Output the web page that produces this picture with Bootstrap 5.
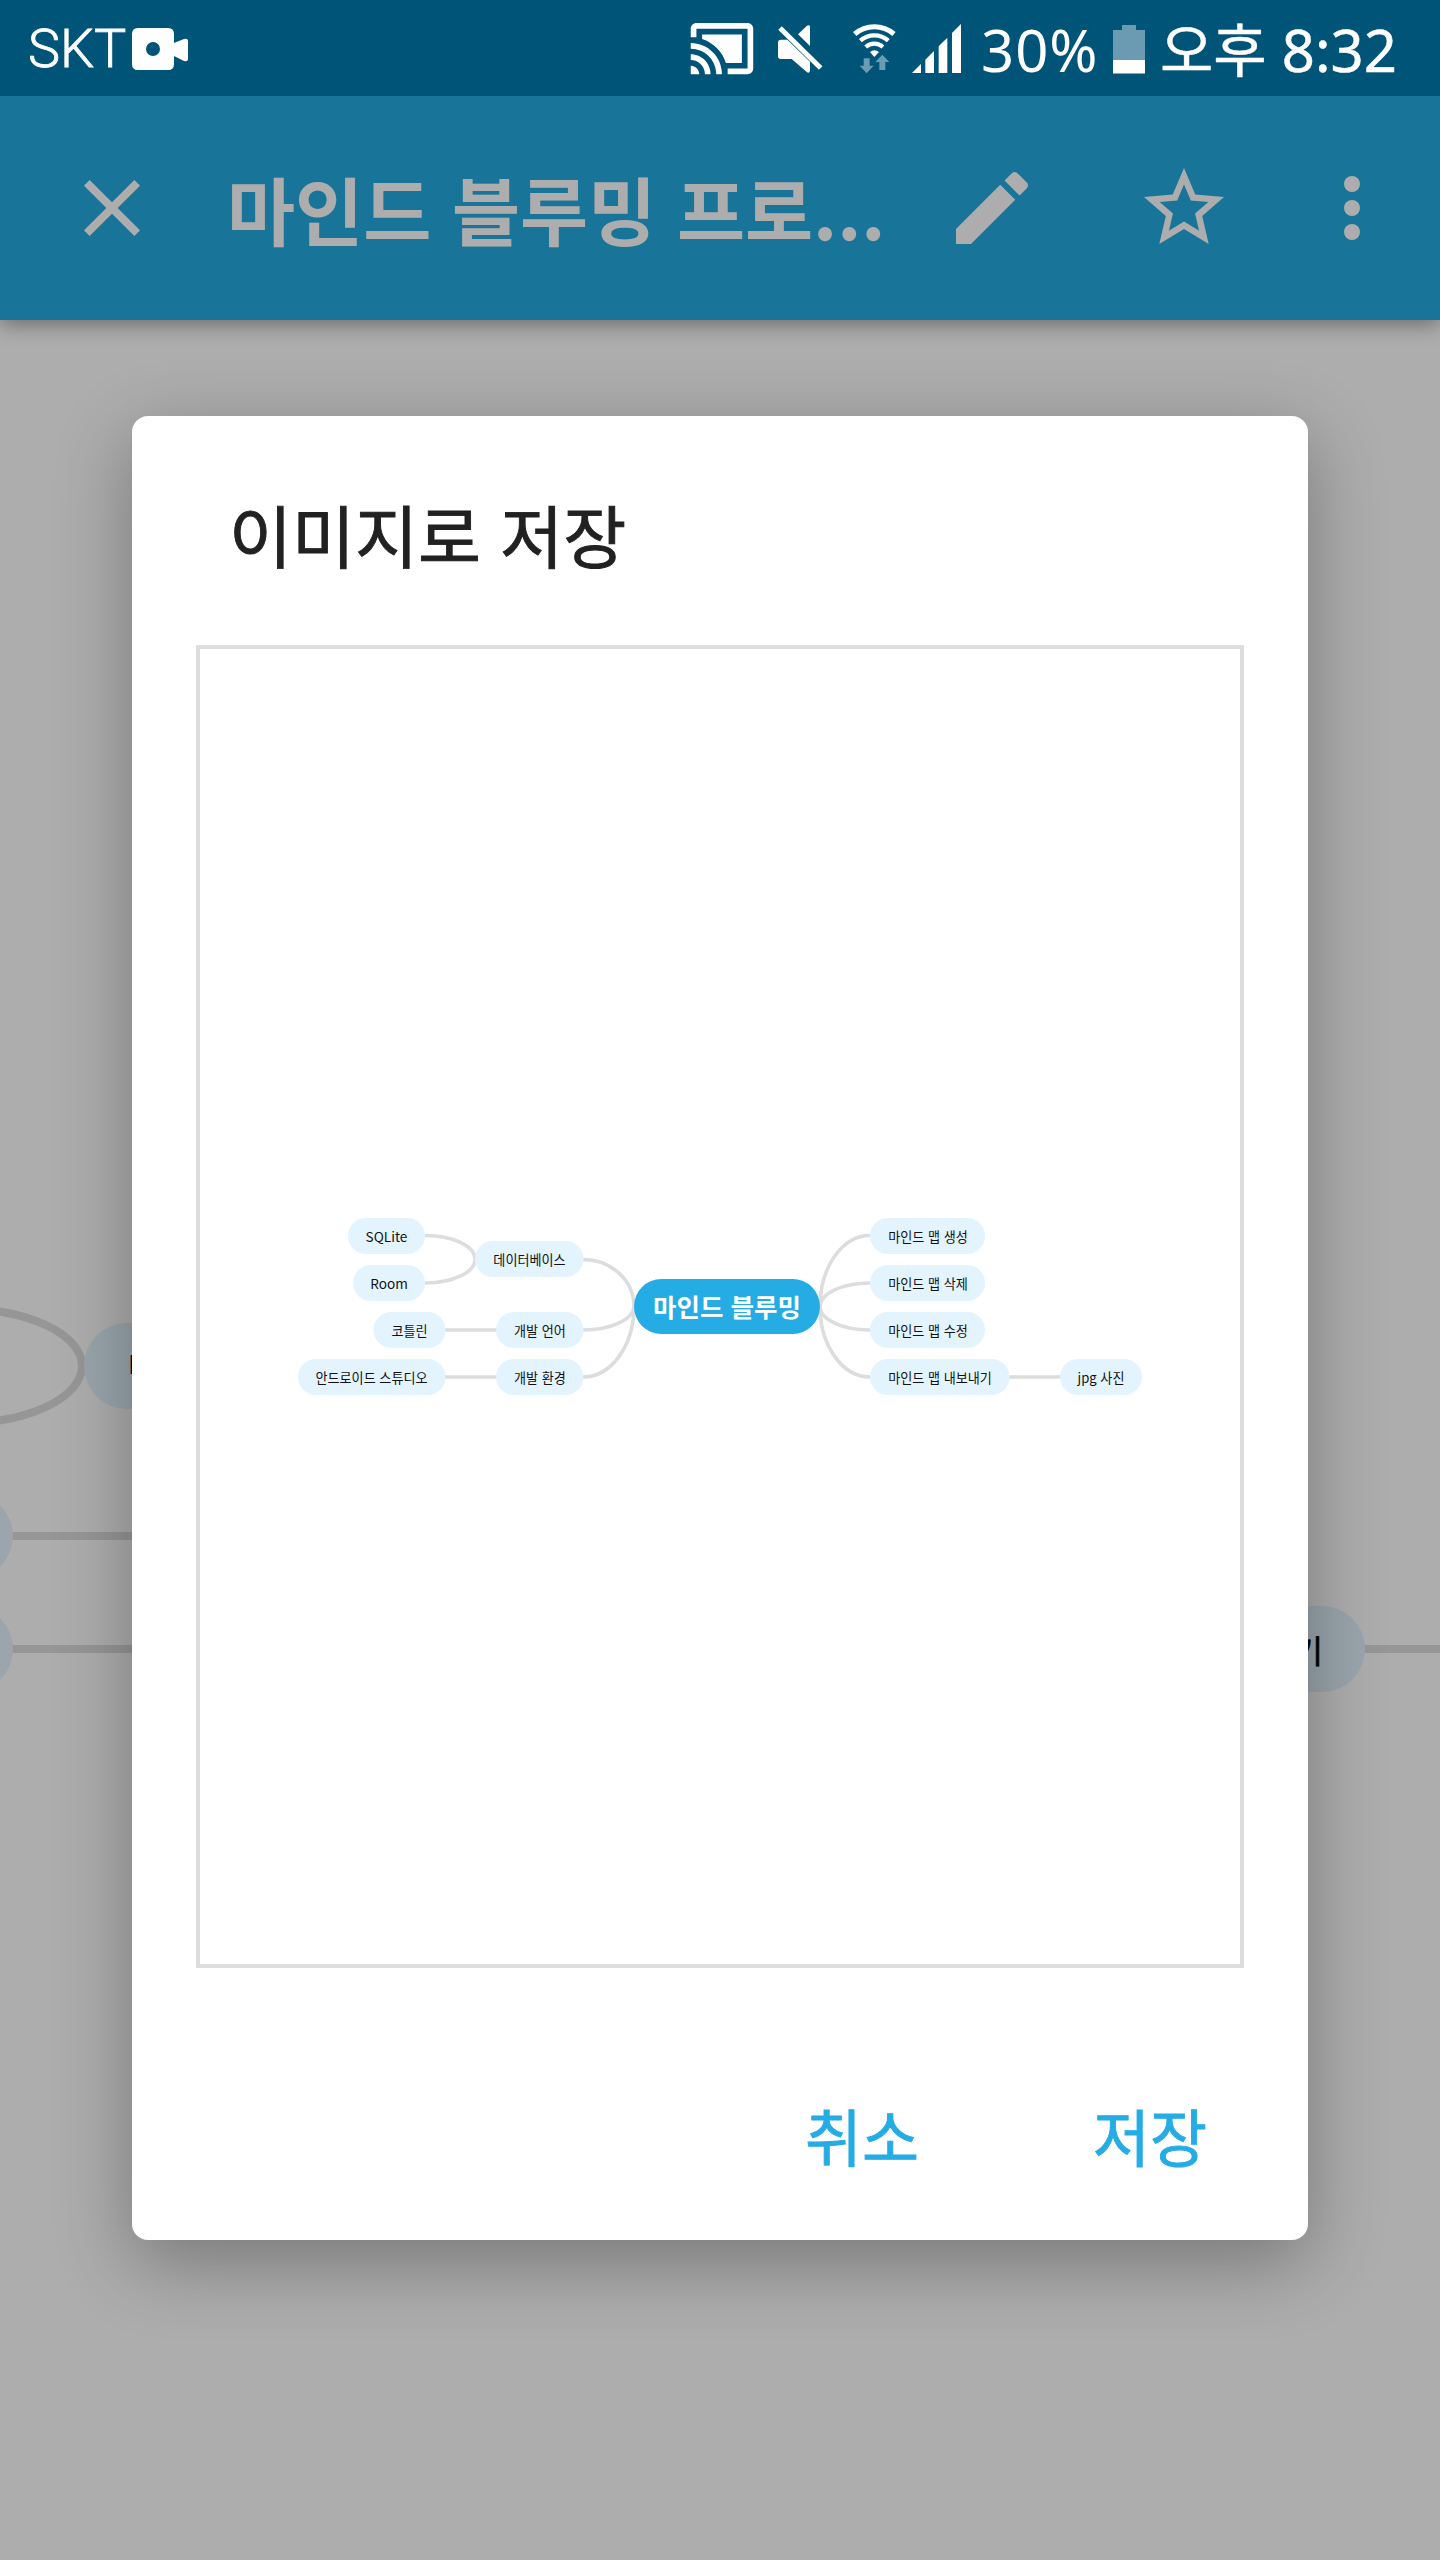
<!DOCTYPE html>
<html lang="ko">
<head>
<meta charset="utf-8">
<meta name="viewport" content="width=device-width, initial-scale=1">
<title>마인드 블루밍</title>
<link href="https://cdn.jsdelivr.net/npm/bootstrap@5.3.0/dist/css/bootstrap.min.css" rel="stylesheet">
<style>
  body { font-family: "Noto Sans CJK KR", "Noto Sans", sans-serif; }
  .phone { width: 1440px; height: 2560px; background: #fff; }
  .status-strip { height: 96px; background: #005477; color: #fff; z-index: 3; padding: 0 48px 0 28px; line-height: 96px; white-space: nowrap; }
  .carrier { font: 300 54px/96px Roboto, sans-serif; width: 102px; padding-top: 2px; -webkit-text-stroke: .8px #fff; }
  .level, .clock { font-family: "Noto Sans", "Noto Sans CJK KR", sans-serif; font-size: 58px; padding-top: 3px; }
  .level { width: 133px; padding-left: 1px; letter-spacing: 1px; }
  .clock { width: 232px; -webkit-text-stroke: .5px #fff; }
  .app-strip { height: 224px; background: #26ace4; color: #fff; padding: 0 36px 0 64px; box-shadow: 0 4px 20px rgba(0,0,0,.4); z-index: 1; }
  .doc-title { font-size: 74px; font-weight: 700; width: 680px; margin-left: 67px; padding-bottom: 1px; line-height: 1; white-space: nowrap; }
  .gap-edit { margin-left: 37px; }
  .gap-star { margin-left: 96px; }
  .gap-more { margin-left: 72px; }
  .dim { background: rgba(0,0,0,.32); z-index: 2; }
  .sheet-wrap { z-index: 4; top: 416px; left: 132px; }
  .sheet { width: 1176px; height: 1824px; border-radius: 16px; padding: 0 64px; background: #fff; box-shadow: 0 22px 76px rgba(0,0,0,.31); }
  .sheet-title { height: 229px; font-size: 68.500px; font-weight: 400; color: #212121; padding: 7px 0 0 33px; line-height: 1; -webkit-text-stroke: .9px #212121; }
  .preview { height: 1323px; border: 4px solid #ddd; }
  .actions { height: 272px; padding: 62px 34px 0 0; }
  .text-action { font-size: 62px; line-height: 1; color: #26ace4; font-weight: 400; padding: 0; border: 0; background: none; width: 120px; -webkit-text-stroke: .9px #26ace4; }
  .text-action + .text-action { margin-left: 168px; }
  svg { display: block; flex: none; }
  .node { fill: #e3f4ff; }
  .link { fill: none; stroke: #ddd; }
  .map-text { fill: #111; text-anchor: middle; }
</style>
</head>
<body>
<div class="phone position-relative overflow-hidden d-flex flex-column">

  <header class="status-strip position-relative d-flex align-items-center flex-shrink-0">
    <span class="carrier">SKT</span>
    <svg width="62" height="96" viewBox="130 0 62 96" fill="#fff">
      <path fill-rule="evenodd" d="M138 28h30q6 0 6 6v9l10-4q4-1 4 2v18q0 3-4 2l-10-5v8q0 6-6 6h-30q-6 0-6-6V34q0-6 6-6zM160 49a7 7 0 1 0-14 0 7 7 0 0 0 14 0z"/>
    </svg>
    <div class="d-flex align-items-center ms-auto">
      <svg width="292" height="96" viewBox="688 0 292 96" fill="#fff">
        <g transform="translate(687.9 14.6) scale(2.84)">
          <path d="M1 18v3h3c0-1.660-1.340-3-3-3zm0-4v2c2.760 0 5 2.240 5 5h2c0-3.870-3.130-7-7-7zm18-7H5v1.630c3.960 1.280 7.090 4.410 8.370 8.370H19V7zM1 10v2c4.970 0 9 4.030 9 9h2c0-6.080-4.930-11-11-11zm20-7H3c-1.100 0-2 .9-2 2v3h2V5h18v14h-7v2h7c1.100 0 2-.9 2-2V5c0-1.100-.9-2-2-2z"/>
        </g>
        <g transform="translate(480 0) scale(.33333)">
          <path d="M894 128q0-9 9-9h19l68 66v28q-2 7-9 4l-46-40h-33q-8 0-8-8zM954 103l27-26q8-4 9 3v58z"/>
          <path d="M900 84L1022 204" stroke="#fff" stroke-width="15"/>
          <g fill="none" stroke="#fff">
            <path d="M1124 102a90 90 0 0 1 118 0" stroke-width="15"/>
            <path d="M1141 122a64 64 0 0 1 84 0" stroke-width="13"/>
            <path d="M1157 141a39 39 0 0 1 52 0" stroke-width="13"/>
          </g>
          <path d="M1170 156q13-10 27 0l-14 15z"/>
          <path fill="#6a9cb4" d="M1151 175h18v22h12l-21 23-21-23h12zM1198 210v-24h-12l21-22 21 22h-12v24z"/>
          <path d="M1296 219l27-27v27zM1336 179l26-26v66h-26zM1376 139l26-26v106h-26zM1416 99l27-27v147h-27z"/>
        </g>
      </svg>
      <span class="level">30%</span>
      <svg width="47" height="96" viewBox="1113 0 47 96">
        <path fill="#6a9bb3" d="M1122 25h14v5h9v30h-32V30h9z"/>
        <path fill="#fff" d="M1113 60h32v13.500h-32z"/>
      </svg>
      <span class="clock">오후 8:32</span>
    </div>
  </header>

  <nav class="app-strip position-relative d-flex align-items-center flex-shrink-0">
    <svg width="96" height="96" viewBox="0 0 24 24" fill="currentColor"><path d="M19 6.410L17.590 5 12 10.590 6.410 5 5 6.410 10.590 12 5 17.590 6.410 19 12 13.410 17.590 19 19 17.590 13.410 12z"/></svg>
    <div class="doc-title">마인드 블루밍 프로...</div>
    <svg class="gap-edit" width="96" height="96" viewBox="0 0 24 24" fill="currentColor"><path d="M3 17.250V21h3.750L17.810 9.940l-3.750-3.750L3 17.250zM20.710 7.040c.39-.39.39-1.020 0-1.410l-2.340-2.340c-.39-.39-1.020-.39-1.410 0l-1.830 1.830 3.750 3.750 1.830-1.830z"/></svg>
    <svg class="gap-star" width="96" height="96" viewBox="0 0 24 24" fill="currentColor"><path d="M22 9.240l-7.190-.62L12 2 9.190 8.630 2 9.240l5.460 4.730L5.820 21 12 17.270 18.180 21l-1.630-7.030L22 9.240zM12 15.400l-3.760 2.270 1-4.280-3.320-2.880 4.380-.38L12 6.100l1.710 4.040 4.380.38-3.320 2.880 1 4.280L12 15.400z"/></svg>
    <svg class="gap-more" width="96" height="96" viewBox="0 0 24 24" fill="currentColor"><circle cx="12" cy="6" r="2"/><circle cx="12" cy="12" r="2"/><circle cx="12" cy="18" r="2"/></svg>
  </nav>

  <!-- editor canvas -->
  <main class="flex-grow-1">
    <svg width="1440" height="2240" viewBox="0 320 1440 2240" font-size="32">
      <g class="link" stroke-width="8">
        <path d="M-37 1309A119 57 0 0 1 82 1366A119 57 0 0 1 -37 1423"/>
        <path d="M0 1536H400M0 1649H400M1300 1649H1440"/>
      </g>
      <rect class="node" x="84" y="1323" width="260" height="86" rx="43"/>
      <rect class="node" x="-200" y="1493" width="213" height="86" rx="43"/>
      <rect class="node" x="-200" y="1606" width="213" height="86" rx="43"/>
      <rect class="node" x="1030" y="1606" width="335" height="86" rx="43"/>
      <text x="128" y="1378">데이터베이스</text>
      <text x="1323" y="1663" text-anchor="end" stroke="#000" stroke-width=".6">마인드 맵 내보내기</text>
    </svg>
  </main>

  <div class="dim position-absolute top-0 start-0 w-100 h-100"></div>

  <div class="sheet-wrap position-absolute">
    <section class="sheet d-flex flex-column">
      <h1 class="sheet-title d-flex align-items-center m-0">이미지로 저장</h1>
      <div class="preview">
        <svg width="1040" height="1315" viewBox="200 649 1040 1315" font-size="13.1">
          <g class="link" stroke-width="3.6">
            <path d="M425 1235.500A50 23.500 0 0 1 475 1259A50 23.500 0 0 1 425 1283"/>
            <path d="M583 1259.500A51 47 0 0 1 634 1306.500A51 24 0 0 1 583 1330M634 1306.500A51 70.500 0 0 1 583 1377"/>
            <path d="M445 1330H497M445 1377H497M1009 1377H1061"/>
            <path d="M870 1235.500A50 71 0 0 0 820 1306.500A50 70.500 0 0 0 870 1377M870 1283A50 23.500 0 0 0 820 1306.500A50 23.500 0 0 0 870 1330"/>
          </g>
          <g class="node">
            <rect x="348" y="1218" width="77" height="36" rx="18"/>
            <rect x="353" y="1265" width="72" height="36" rx="18"/>
            <rect x="373.500" y="1312" width="72" height="36" rx="18"/>
            <rect x="298" y="1359" width="147.500" height="36" rx="18"/>
            <rect x="475" y="1241" width="108.500" height="36" rx="18"/>
            <rect x="496" y="1312" width="87.500" height="36" rx="18"/>
            <rect x="496" y="1359" width="87.500" height="36" rx="18"/>
            <rect x="870" y="1218" width="115" height="36" rx="18"/>
            <rect x="870" y="1265" width="115" height="36" rx="18"/>
            <rect x="870" y="1312" width="115" height="36" rx="18"/>
            <rect x="870" y="1359" width="139.500" height="36" rx="18"/>
            <rect x="1060" y="1359" width="82" height="36" rx="18"/>
          </g>
          <rect x="634" y="1279" width="186" height="55" rx="27.500" fill="#26ace4"/>
          <g class="map-text">
            <text x="386.500" y="1241.500" font-size="13.6">SQLite</text>
            <text x="389" y="1288.500" font-size="13.6">Room</text>
            <text x="409.500" y="1335.500">코틀린</text>
            <text x="371.500" y="1382.500">안드로이드 스튜디오</text>
            <text x="529.500" y="1264.500">데이터베이스</text>
            <text x="540" y="1335.500">개발 언어</text>
            <text x="540" y="1382.500">개발 환경</text>
            <text x="928" y="1241.500">마인드 맵 생성</text>
            <text x="928" y="1288.500">마인드 맵 삭제</text>
            <text x="928" y="1335.500">마인드 맵 수정</text>
            <text x="940" y="1382.500">마인드 맵 내보내기</text>
            <text x="1101" y="1382.500">jpg 사진</text>
          </g>
          <text x="727" y="1316.500" font-size="25.500" font-weight="700" fill="#fff" text-anchor="middle">마인드 블루밍</text>
        </svg>
      </div>
      <div class="actions d-flex align-items-center justify-content-end">
        <button class="text-action" type="button">취소</button>
        <button class="text-action" type="button">저장</button>
      </div>
    </section>
  </div>
</div>
<script src="https://cdn.jsdelivr.net/npm/bootstrap@5.3.0/dist/js/bootstrap.bundle.min.js"></script>
</body>
</html>
